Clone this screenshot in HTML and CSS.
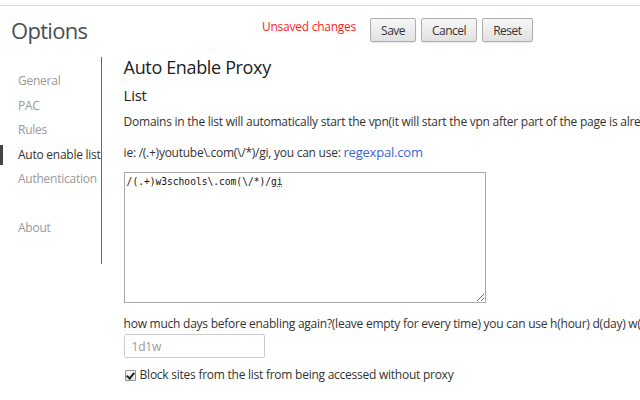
FILE: index.html
```
<!DOCTYPE html>
<html>
<head>
<meta charset="utf-8">
<link rel="stylesheet" href="styles.css">
</head>
<body>
<div class="page">
  <header class="header">
    <h1 class="title">Options</h1>
    <span class="unsaved">Unsaved changes</span>
    <div class="actions">
      <button class="btn">Save</button>
      <button class="btn">Cancel</button>
      <button class="btn">Reset</button>
    </div>
  </header>
  <div class="body">
    <nav class="nav">
      <a class="nav-item">General</a>
      <a class="nav-item">PAC</a>
      <a class="nav-item">Rules</a>
      <a class="nav-item active">Auto enable list</a>
      <a class="nav-item">Authentication</a>
      <a class="nav-item spacer"></a>
      <a class="nav-item">About</a>
    </nav>
    <main class="main">
      <h2 class="section-title">Auto Enable Proxy</h2>
      <h3 class="sub-title">List</h3>
      <p class="text">Domains in the list will automatically start the vpn(it will start the vpn after part of the page is already loaded)</p>
      <p class="text example">ie: /(.+)youtube\.com(\/*)/gi, you can use: <a class="link">regexpal.com</a></p>
      <div class="editor"><textarea class="list-area" spellcheck="false">/(.+)w3schools\.com(\/*)/gi</textarea><span class="spell">gi</span></div>
      <p class="text days">how much days before enabling again?(leave empty for every time) you can use h(hour) d(day) w(week)</p>
      <input class="days-input" type="text" placeholder="1d1w">
      <label class="check-row"><span class="check"></span>Block sites from the list from being accessed without proxy</label>
    </main>
  </div>
</div>
</body>
</html>
```
FILE: styles.css
```
html, body {
  margin: 0;
  padding: 0;
  overflow: hidden;
  background: #fff;
}
body {
  font-family: "Open Sans", "Noto Sans", sans-serif;
  font-size: 12px;
  letter-spacing: -0.25px;
  color: #333;
  width: 640px;
  height: 400px;
}
.page {
  margin-top: 5px;
  border-top: 1px solid #dedede;
}
.header {
  display: flex;
  align-items: flex-start;
  height: 51px;
}
.title {
  margin: 8px 0 0 11px;
  width: 251px;
  font-size: 22px;
  font-weight: 400;
  line-height: 32px;
  color: #4a4f56;
  letter-spacing: -0.7px;
}
.unsaved {
  margin-top: 12px;
  margin-right: 14px;
  color: #ff2424;
  line-height: 18px;
  white-space: nowrap;
}
.actions {
  display: flex;
  gap: 5px;
  margin-top: 12px;
}
.btn {
  font-family: inherit;
  font-size: 12px;
  letter-spacing: -0.5px;
  color: #333;
  height: 24px;
  padding: 0 10px;
  border: 1px solid #adadad;
  border-radius: 2px;
  background: linear-gradient(#f7f7f7, #e1e1e1);
  box-shadow: 0 1px 1px rgba(0,0,0,0.08);
}
.body {
  display: flex;
  align-items: flex-start;
}
.nav {
  width: 102px;
  border-right: 1px solid #666;
  padding: 12px 0 23px;
  display: flex;
  flex-direction: column;
}
.nav-item {
  position: relative;
  padding-left: 18px;
  line-height: 24.5px;
  height: 24.5px;
  color: #999;
  white-space: nowrap;
}
.nav-item.active {
  color: #333;
}
.nav-item.active::before {
  content: "";
  position: absolute;
  left: 0;
  top: 2px;
  width: 3px;
  height: 20px;
  background: #444;
}
.main {
  margin-left: 22px;
  white-space: nowrap;
}
.section-title {
  margin: -2px 0 0;
  font-size: 18px;
  letter-spacing: -0.35px;
  font-weight: 400;
  line-height: 24px;
  color: #222;
}
.sub-title {
  margin: 5px 0 0;
  font-size: 15px;
  letter-spacing: -0.3px;
  font-weight: 400;
  line-height: 22px;
  color: #222;
}
.text {
  margin: 7px 0 0;
  line-height: 18px;
}
.example {
  margin-top: 12px;
}
.link {
  color: #3f62d8;
  font-size: 13px;
  letter-spacing: -0.2px;
}
.editor {
  position: relative;
  margin-top: 10px;
  width: 362px;
  height: 131px;
}
.list-area {
  box-sizing: border-box;
  width: 362px;
  height: 131px;
  margin: 0;
  padding: 2px 2px;
  border: 1px solid #a9a9a9;
  font-family: "DejaVu Sans Mono", monospace;
  font-size: 9.6px;
  letter-spacing: 0;
  line-height: 14px;
  color: #111;
  resize: both;
  display: block;
}
.spell {
  position: absolute;
  left: calc(3px + 25ch);
  top: 3px;
  font-family: "DejaVu Sans Mono", monospace;
  font-size: 9.6px;
  letter-spacing: 0;
  line-height: 14px;
  color: transparent;
  text-decoration: underline dotted #e33;
  text-decoration-thickness: 1px;
  pointer-events: none;
}
.days {
  margin-top: 12px;
}
.days-input {
  display: block;
  box-sizing: border-box;
  width: 141px;
  height: 24px;
  margin: 1px 0 0;
  padding: 0 7px;
  border: 1px solid #ccc;
  border-radius: 2px;
  font-family: inherit;
  font-size: 12px;
  letter-spacing: -0.25px;
}
.days-input::placeholder {
  color: #999;
}
.check-row {
  display: flex;
  align-items: center;
  gap: 4px;
  margin-top: 8px;
  line-height: 18px;
}
.check {
  position: relative;
  box-sizing: border-box;
  width: 11px;
  height: 11px;
  margin-left: 1px;
  border: 1px solid #8f8f8f;
  border-radius: 1px;
  background: linear-gradient(#fdfdfd, #e6e6e6);
}
.check::after {
  content: "";
  position: absolute;
  left: 2.5px;
  top: 0px;
  width: 3px;
  height: 6px;
  border: solid #222;
  border-width: 0 2px 2px 0;
  transform: rotate(40deg);
}
```
